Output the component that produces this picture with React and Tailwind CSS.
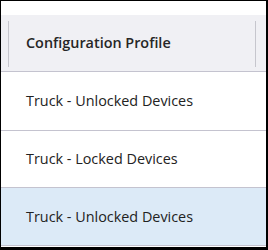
import React from 'react';

const rows = [
  { label: 'Truck - Unlocked Devices', h: 'h-[59px]', selected: false },
  { label: 'Truck - Locked Devices', h: 'h-[57px]', selected: false },
  { label: 'Truck - Unlocked Devices', h: 'h-[58px]', selected: true },
];

export default function App() {
  return (
    <div
      className="w-[268px] h-[250px] bg-white border-t border-l border-r-2 border-b-[3px] border-black pt-[14px] text-[14.4px] text-[#222222]"
      style={{ fontFamily: '"Open Sans", "Noto Sans", sans-serif' }}
    >
      {/* Header */}
      <div className="h-[57px] flex bg-[#f0f0f4] border-b border-[#c4c3cf]">
        <div className="w-px h-[46px] mt-[6px] ml-[7px] bg-[#c6c6cd]" />
        <div className="flex-1 flex items-center pl-[17px] font-semibold text-[#262626]">
          Configuration Profile
        </div>
        <div className="w-px h-[46px] mt-[6px] mr-[10px] bg-[#c6c6cd]" />
      </div>

      {/* Rows */}
      {rows.map((row, i) => (
        <div
          key={i}
          className={`${row.h} flex items-center pl-[25px] border-b border-[#c4c3cf] ${
            row.selected ? 'bg-[#dceaf7]' : 'bg-white'
          }`}
        >
          {row.label}
        </div>
      ))}
    </div>
  );
}
